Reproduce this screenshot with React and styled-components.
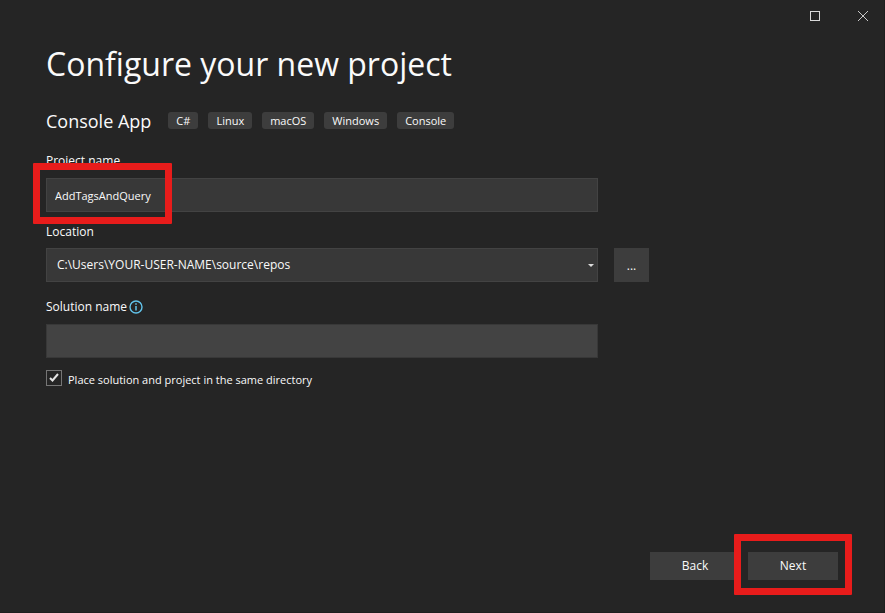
import React, { useState } from "react";
import styled, { createGlobalStyle, css } from "styled-components";

const GlobalStyle = createGlobalStyle`
  * { box-sizing: border-box; }
  body {
    margin: 0;
    background: #252525;
    color: #fafafa;
    font: 12px/16px "Open Sans", "Noto Sans", sans-serif;
  }
  button, input, select { font: inherit; color: inherit; margin: 0; }
`;

const Window = styled.div`
  display: flex;
  flex-direction: column;
  min-height: 100vh;
  box-shadow: inset -1px -1px #1f1f1f;
`;

const TitleBar = styled.header`
  display: flex;
  justify-content: flex-end;
  gap: 4px;
  height: 32px;
`;

const CaptionButton = styled.button`
  display: grid;
  place-items: center;
  width: 44px;
  padding: 0;
  border: 0;
  background: none;
  color: ${(p) => p.$tone};
`;

const Content = styled.main`
  flex: 1;
  padding: 8px 46px 0;
`;

const Title = styled.h1`
  margin: 0;
  font-size: 32px;
  line-height: 48px;
  font-weight: 400;
`;

const Template = styled.div`
  display: flex;
  flex-wrap: wrap;
  align-items: flex-start;
  gap: 10px;
  margin-top: 20px;
`;

const TemplateName = styled.h2`
  margin: 0 7px 0 0;
  font-size: 18px;
  line-height: 26px;
  font-weight: 400;
`;

const Tag = styled.span`
  margin-top: 4px;
  padding: 0 8px;
  border-radius: 3px;
  background: #3d3d3d;
  font-size: 11px;
  line-height: 17px;
`;

const Field = styled.div`
  display: flex;
  flex-direction: column;
  gap: ${(p) => p.$gap}px;
  margin-top: ${(p) => p.$top}px;
`;

const LabelRow = styled.div`
  display: flex;
  align-items: center;
  gap: 2px;
`;

const Label = styled.label`
  line-height: 18px;
`;

const ControlRow = styled.div`
  display: flex;
  gap: 16px;
`;

const ControlBox = styled.div`
  position: relative;
  flex: 0 1 552px;
  display: flex;
`;

const controlStyle = css`
  width: 100%;
  height: 34px;
  border: 1px solid #434343;
  border-radius: 0;
  outline: 0;
  background: #383838;
`;

const TextInput = styled.input`
  ${controlStyle}
  padding: 0 8px;
  font-size: 11px;
  ${(p) => p.$muted && css`
    border-color: #383838;
    background: #434343;
  `}
`;

const Select = styled.select`
  ${controlStyle}
  padding: 0 10px;
  appearance: none;
`;

const Arrow = styled.svg`
  position: absolute;
  right: 4px;
  top: 16px;
  pointer-events: none;
`;

const BrowseButton = styled.button`
  width: 35px;
  height: 34px;
  padding: 2px 0 0;
  border: 0;
  background: #3d3d3d;
`;

const CheckRow = styled.label`
  display: flex;
  align-items: flex-start;
  gap: 6px;
  margin-top: 12px;
  font-size: 11px;
`;

const CheckText = styled.span`
  padding-top: 2px;
`;

const CheckHolder = styled.span`
  position: relative;
  display: flex;
`;

const Checkbox = styled.input`
  appearance: none;
  width: 16px;
  height: 16px;
  border: 1px solid #767676;
  background: #252525;
  & + svg { display: none; }
  &:checked + svg { display: block; }
`;

const CheckMark = styled.svg`
  position: absolute;
  inset: 0;
  pointer-events: none;
`;

const Footer = styled.footer`
  display: flex;
  justify-content: flex-end;
  gap: 8px;
  padding: 16px 47px 33px;
`;

const ActionHolder = styled.div`
  position: relative;
`;

const ActionButton = styled.button`
  width: 90px;
  height: 28px;
  padding: 0;
  border: 0;
  background: #3d3d3d;
`;

const Highlight = styled.div`
  position: absolute;
  inset: ${(p) => p.$inset};
  width: ${(p) => p.$width || "auto"};
  border: 7px solid #e81c1b;
  border-radius: 1px;
  pointer-events: none;
`;

const tags = ["C#", "Linux", "macOS", "Windows", "Console"];

export default function App() {
  const [name, setName] = useState("AddTagsAndQuery");
  const [solution, setSolution] = useState("");
  const [same, setSame] = useState(true);

  return (
    <>
      <GlobalStyle />
      <Window>
        <TitleBar>
          <CaptionButton $tone="#dadada" aria-label="Maximize">
            <svg width="10" height="10" fill="none" stroke="currentColor" shapeRendering="crispEdges">
              <rect x=".5" y=".5" width="9" height="9" />
            </svg>
          </CaptionButton>
          <CaptionButton $tone="#c8c8c8" aria-label="Close">
            <svg width="10" height="10" fill="none" stroke="currentColor">
              <path d="M0 0l10 10M10 0L0 10" />
            </svg>
          </CaptionButton>
        </TitleBar>
        <Content>
          <Title>Configure your new project</Title>
          <Template>
            <TemplateName>Console App</TemplateName>
            {tags.map((tag) => <Tag key={tag}>{tag}</Tag>)}
          </Template>

          <Field $top={18} $gap={8}>
            <Label htmlFor="project">Project name</Label>
            <ControlRow>
              <ControlBox>
                <TextInput id="project" value={name} onChange={(e) => setName(e.target.value)} />
                <Highlight $inset="-15px auto -12px -13px" $width="139px" />
              </ControlBox>
            </ControlRow>
          </Field>

          <Field $top={11} $gap={7}>
            <Label htmlFor="location">Location</Label>
            <ControlRow>
              <ControlBox>
                <Select id="location">
                  <option>C:\Users\YOUR-USER-NAME\source\repos</option>
                </Select>
                <Arrow width="6" height="3" fill="#dcdcdc"><path d="M0 0h6L3 3z" /></Arrow>
              </ControlBox>
              <BrowseButton aria-label="Browse for location">...</BrowseButton>
            </ControlRow>
          </Field>

          <Field $top={16} $gap={8}>
            <LabelRow>
              <Label htmlFor="solution">Solution name</Label>
              <svg width="14" height="14" fill="none" stroke="#62c4ec">
                <circle cx="7" cy="7" r="6" strokeWidth="1.4" />
                <path d="M7 6v4.5M7 3.2v1.5" strokeWidth="1.5" />
              </svg>
            </LabelRow>
            <ControlRow>
              <ControlBox>
                <TextInput id="solution" $muted value={solution} onChange={(e) => setSolution(e.target.value)} />
              </ControlBox>
            </ControlRow>
          </Field>

          <CheckRow>
            <CheckHolder>
              <Checkbox type="checkbox" checked={same} onChange={(e) => setSame(e.target.checked)} />
              <CheckMark width="16" height="16" fill="none" stroke="#e4e4e4" strokeWidth="2">
                <path d="M4 8l2.5 2.5L12 4" />
              </CheckMark>
            </CheckHolder>
            <CheckText>Place solution and project in the same directory</CheckText>
          </CheckRow>
        </Content>
        <Footer>
          <ActionButton>Back</ActionButton>
          <ActionHolder>
            <ActionButton>Next</ActionButton>
            <Highlight $inset="-18px -14px -15px -14px" />
          </ActionHolder>
        </Footer>
      </Window>
    </>
  );
}
